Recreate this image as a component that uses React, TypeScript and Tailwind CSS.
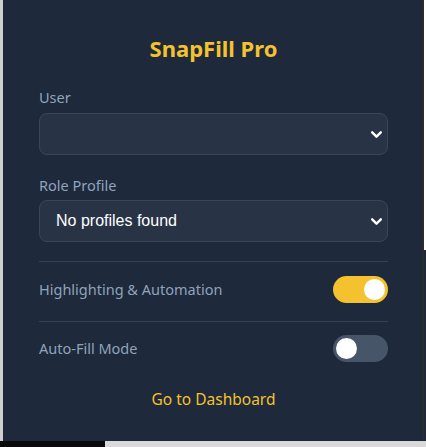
import React, { useState } from "react";

type ToggleProps = {
  on: boolean;
  onChange: () => void;
};

function Toggle({ on, onChange }: ToggleProps) {
  return (
    <button
      onClick={onChange}
      className={`flex h-[27px] w-[55px] shrink-0 items-center rounded-full px-[3px] ${
        on ? "justify-end bg-[#f4c22f]" : "justify-start bg-[#475569]"
      }`}
    >
      <span className="h-[21px] w-[21px] rounded-full bg-white" />
    </button>
  );
}

function Chevron() {
  return (
    <svg width="13" height="13" viewBox="0 0 12 12" className="shrink-0">
      <path
        d="M2 4l4 4 4-4"
        fill="none"
        stroke="#ffffff"
        strokeWidth="2.2"
        strokeLinecap="round"
        strokeLinejoin="round"
      />
    </svg>
  );
}

function SelectBox({ value }: { value: string }) {
  return (
    <div className="flex h-[42px] items-center justify-between rounded-lg border border-[#394558] bg-[#283446] pl-4 pr-[4px]">
      <span
        className="text-[16px] text-white"
        style={{ fontFamily: '"Liberation Sans", Arial, sans-serif' }}
      >
        {value}
      </span>
      <Chevron />
    </div>
  );
}

export default function App() {
  const [highlight, setHighlight] = useState(true);
  const [autoFill, setAutoFill] = useState(false);

  return (
    <div
      className="flex h-[447px] w-[426px] flex-col bg-[#d9d9d9]"
      style={{ fontFamily: '"Noto Sans", "Open Sans", sans-serif' }}
    >
      <div className="flex flex-1">
        <div className="w-[3px] bg-[#cfcfcf]" />
        <div className="flex w-[419px] flex-col bg-[#1e293b] pl-[36px] pr-[34px] pt-[33px]">
          <h1 className="text-center text-[22px] font-bold leading-[30px] text-[#f4c22f]">
            SnapFill Pro
          </h1>

          <label className="mt-[24px] text-[14.5px] leading-[20px] text-[#8fa3bc]">User</label>
          <div className="mt-[6px]">
            <SelectBox value="" />
          </div>

          <label className="mt-[20px] text-[14.5px] leading-[20px] text-[#8fa3bc]">
            Role Profile
          </label>
          <div className="mt-[5px]">
            <SelectBox value="No profiles found" />
          </div>

          <div className="mt-[19px] border-t border-[#334155]" />

          <div className="flex items-center justify-between pb-[18px] pt-[14px]">
            <span className="text-[14.5px] text-[#8fa3bc]">Highlighting &amp; Automation</span>
            <Toggle on={highlight} onChange={() => setHighlight(!highlight)} />
          </div>

          <div className="border-t border-[#334155]" />

          <div className="flex items-center justify-between pt-[13px]">
            <span className="text-[14.5px] text-[#8fa3bc]">Auto-Fill Mode</span>
            <Toggle on={autoFill} onChange={() => setAutoFill(!autoFill)} />
          </div>

          <a className="mt-[26px] text-center text-[15.5px] leading-[22px] text-[#f4c22f]">
            Go to Dashboard
          </a>
        </div>
        <div className="w-[2px] bg-[#2b2b2b]" />
        <div className="flex w-[2px] flex-col">
          <div className="h-[250px] bg-white" />
          <div className="flex-1 bg-[#1e293b]" />
        </div>
      </div>
      <div className="flex h-[6px]">
        <div className="w-[105px] bg-[#0a0a0a]" />
        <div className="flex-1 bg-[#d9d9d9]" />
      </div>
    </div>
  );
}
